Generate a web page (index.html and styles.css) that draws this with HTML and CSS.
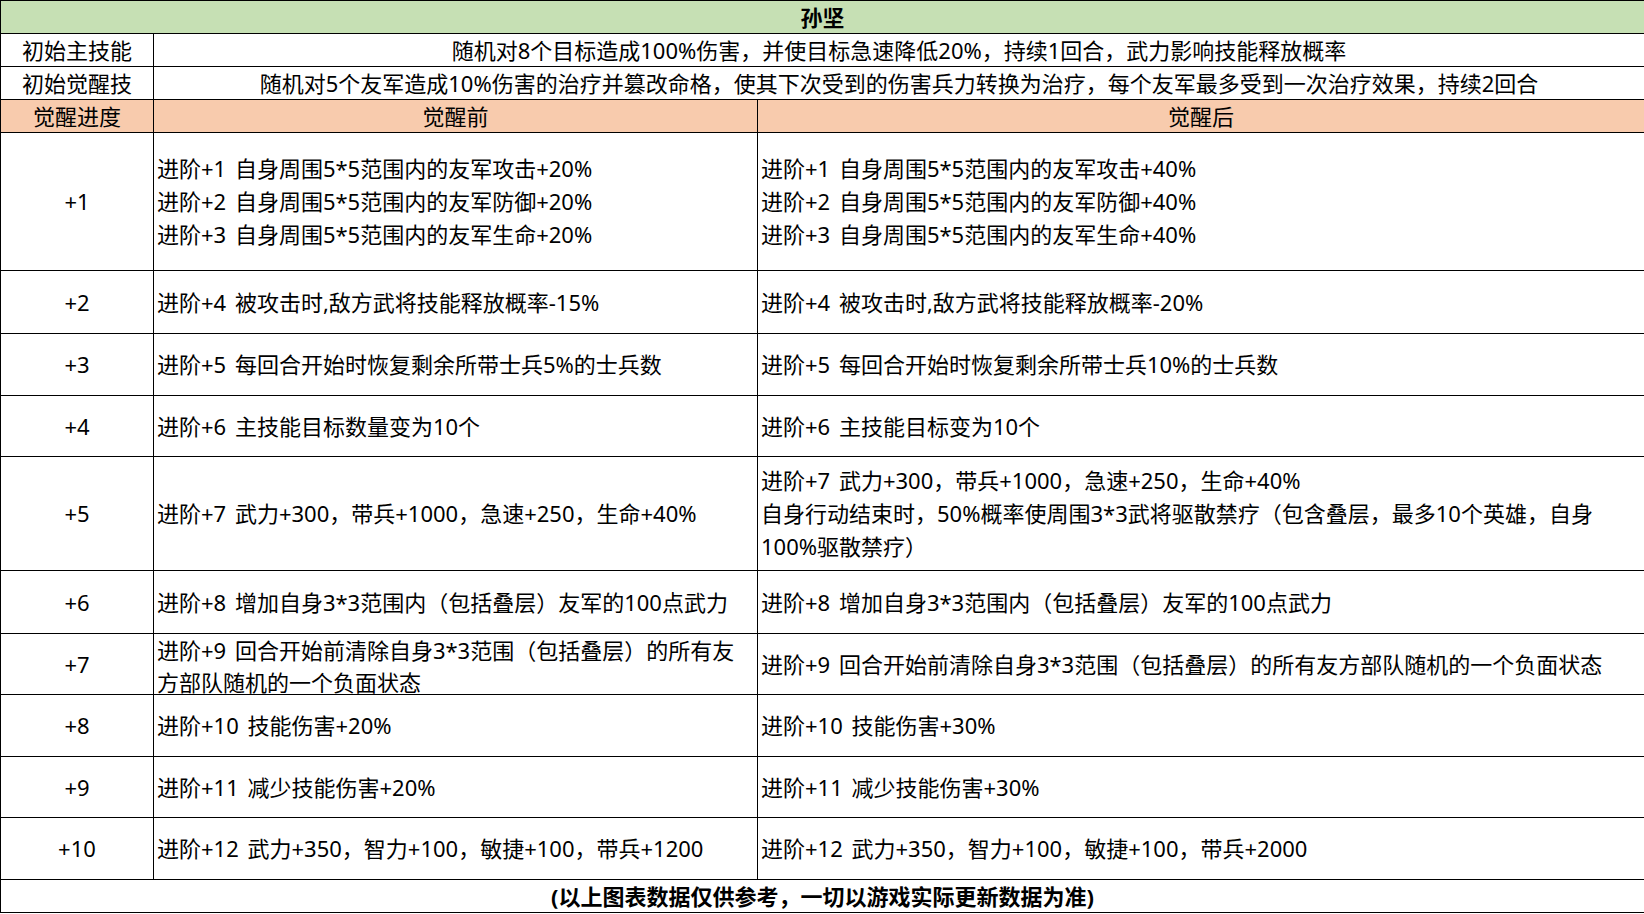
FILE: index.html
```html
<!DOCTYPE html>
<html lang="zh-CN">
<head>
<meta charset="utf-8">
<title>孙坚</title>
<link rel="stylesheet" href="styles.css">
</head>
<body>
<table class="sheet">
  <colgroup>
    <col class="c1">
    <col class="c2">
    <col class="c3">
  </colgroup>
  <tr class="r-33"><td colspan="3" class="title">孙坚</td></tr>
  <tr class="r-33"><td class="center">初始主技能</td><td colspan="2" class="center">随机对8个目标造成100%伤害，并使目标急速降低20%，持续1回合，武力影响技能释放概率</td></tr>
  <tr class="r-33"><td class="center">初始觉醒技</td><td colspan="2" class="center">随机对5个友军造成10%伤害的治疗并篡改命格，使其下次受到的伤害兵力转换为治疗，每个友军最多受到一次治疗效果，持续2回合</td></tr>
  <tr class="r-33 head"><td class="center">觉醒进度</td><td class="center">觉醒前</td><td class="center">觉醒后</td></tr>
  <tr class="r-138"><td class="center">+1</td><td class="text">进阶+1 自身周围5*5范围内的友军攻击+20%<br>进阶+2 自身周围5*5范围内的友军防御+20%<br>进阶+3 自身周围5*5范围内的友军生命+20%</td><td class="text">进阶+1 自身周围5*5范围内的友军攻击+40%<br>进阶+2 自身周围5*5范围内的友军防御+40%<br>进阶+3 自身周围5*5范围内的友军生命+40%</td></tr>
  <tr class="r-63"><td class="center">+2</td><td class="text">进阶+4 被攻击时,敌方武将技能释放概率-15%</td><td class="text">进阶+4 被攻击时,敌方武将技能释放概率-20%</td></tr>
  <tr class="r-62"><td class="center">+3</td><td class="text">进阶+5 每回合开始时恢复剩余所带士兵5%的士兵数</td><td class="text">进阶+5 每回合开始时恢复剩余所带士兵10%的士兵数</td></tr>
  <tr class="r-61"><td class="center">+4</td><td class="text">进阶+6 主技能目标数量变为10个</td><td class="text">进阶+6 主技能目标变为10个</td></tr>
  <tr class="r-114"><td class="center">+5</td><td class="text">进阶+7 武力+300，带兵+1000，急速+250，生命+40%</td><td class="text">进阶+7 武力+300，带兵+1000，急速+250，生命+40%<br>自身行动结束时，50%概率使周围3*3武将驱散禁疗（包含叠层，最多10个英雄，自身100%驱散禁疗）</td></tr>
  <tr class="r-63"><td class="center">+6</td><td class="text">进阶+8 增加自身3*3范围内（包括叠层）友军的100点武力</td><td class="text">进阶+8 增加自身3*3范围内（包括叠层）友军的100点武力</td></tr>
  <tr class="r-61"><td class="center">+7</td><td class="text"><div class="fit">进阶+9 回合开始前清除自身3*3范围（包括叠层）的所有友方部队随机的一个负面状态</div></td><td class="text">进阶+9 回合开始前清除自身3*3范围（包括叠层）的所有友方部队随机的一个负面状态</td></tr>
  <tr class="r-62"><td class="center">+8</td><td class="text">进阶+10 技能伤害+20%</td><td class="text">进阶+10 技能伤害+30%</td></tr>
  <tr class="r-61"><td class="center">+9</td><td class="text">进阶+11 减少技能伤害+20%</td><td class="text">进阶+11 减少技能伤害+30%</td></tr>
  <tr class="r-62"><td class="center">+10</td><td class="text">进阶+12 武力+350，智力+100，敏捷+100，带兵+1200</td><td class="text">进阶+12 武力+350，智力+100，敏捷+100，带兵+2000</td></tr>
  <tr class="r-33"><td colspan="3" class="footer">(以上图表数据仅供参考，一切以游戏实际更新数据为准)</td></tr>
</table>
</body>
</html>
```
FILE: styles.css
```css
html, body {
  margin: 0;
  padding: 0;
  background: #ffffff;
}

.sheet {
  width: 1644px;
  border-collapse: collapse;
  table-layout: fixed;
  font-family: "Noto Sans", "Noto Sans CJK SC", sans-serif;
  font-size: 22px;
  word-spacing: 3px;
  line-height: 33px;
  color: #000000;
}

.c1 { width: 153px; }
.c2 { width: 604px; }
.c3 { width: 887px; }

.sheet td {
  border: 1.5px solid #000000;
  padding: 0 3px;
  vertical-align: middle;
  overflow: visible;
}

.center { text-align: center; }
.text { text-align: left; padding-left: 4px; }

.title {
  background: #c6e0b4;
  text-align: center;
  font-weight: bold;
}

.head td { background: #f8cbad; }

.footer {
  text-align: center;
  font-weight: bold;
}

.r-33 { height: 33px; }
.r-33 td { line-height: 30px; }
.r-138 { height: 138px; }
.r-114 { height: 114px; }
.r-63 { height: 63px; }
.r-62 { height: 62px; }
.r-61 { height: 61px; }

.fit {
  height: 57px;
  display: flex;
  flex-direction: column;
  justify-content: center;
  line-height: 32px;
  margin-top: 3px;
}
```
